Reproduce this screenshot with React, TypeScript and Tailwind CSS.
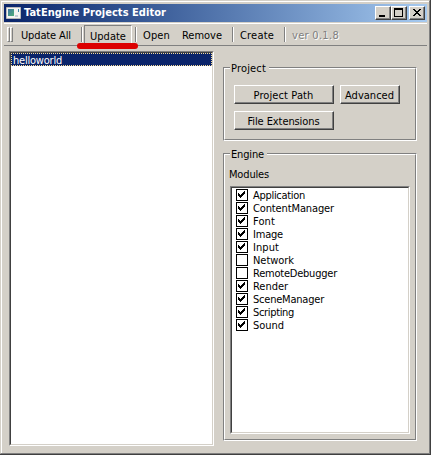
import { useLayoutEffect, useRef } from 'react';

// Text whose letter spacing is adjusted so that it fills the given width.
function Label({ text, width, className = '' }: { text: string; width: number; className?: string }) {
  const ref = useRef<HTMLSpanElement>(null);
  useLayoutEffect(() => {
    const el = ref.current;
    if (!el) return;
    el.style.letterSpacing = '0px';
    const natural = el.getBoundingClientRect().width;
    el.style.letterSpacing = `${(width - natural) / text.length}px`;
  }, [text, width]);
  return <span ref={ref} className={`shrink-0 whitespace-pre ${className}`}>{text}</span>;
}

function Separator({ className = '' }: { className?: string }) {
  return <div className={`h-[15px] w-0.5 shrink-0 border-l border-r border-l-[#808080] border-r-white ${className}`} />;
}

function Grip() {
  return <div className="h-[15px] w-[3px] border border-t-white border-l-white border-r-[#808080] border-b-[#808080]" />;
}

function CaptionButton({ kind, className = '' }: { kind: 'min' | 'max' | 'close'; className?: string }) {
  return (
    <button className={`h-3.5 w-4 shrink-0 border border-t-white border-l-white border-r-[#404040] border-b-[#404040] bg-[#d4d0c8] ${className}`}>
      <svg width="14" height="12" viewBox="0 0 14 12" shapeRendering="crispEdges" className="block">
        <path d="M13.5 0V11.5H0" fill="none" stroke="#808080" />
        {kind === 'min' && <path d="M3 8h6v2H3z" />}
        {kind === 'max' && <path fillRule="evenodd" d="M2 1h9v9H2zM3 3v6h7V3z" />}
        {kind === 'close' && (
          <path d="M3 2h2v1H3zM9 2h2v1H9zM4 3h2v1H4zM8 3h2v1H8zM5 4h4v1H5zM6 5h2v1H6zM5 6h4v1H5zM4 7h2v1H4zM8 7h2v1H8zM3 8h2v1H3zM9 8h2v1H9z" />
        )}
      </svg>
    </button>
  );
}

function Button({ text, textWidth, className }: { text: string; textWidth: number; className: string }) {
  return (
    <button className={`h-[19px] border border-t-white border-l-white border-r-[#404040] border-b-[#404040] ${className}`}>
      <span className="flex h-full items-center justify-center border-r border-b border-[#808080] pt-0.5">
        <Label text={text} width={textWidth} />
      </span>
    </button>
  );
}

function Group({ title, titleWidth, className, children }: { title: string; titleWidth: number; className: string; children: React.ReactNode }) {
  return (
    <section className={`border border-t-[#808080] border-l-[#808080] border-r-white border-b-white ${className}`}>
      <div className="h-full border border-t-white border-l-white border-r-[#808080] border-b-[#808080]">
        <h2 className="-mt-[7px] ml-[5px] flex h-[13px] w-fit bg-[#d4d0c8] pr-[3px] pl-px leading-[14px]">
          <Label text={title} width={titleWidth} />
        </h2>
        {children}
      </div>
    </section>
  );
}

function ListBox({ className, children }: { className: string; children: React.ReactNode }) {
  return (
    <div className={`border border-t-[#808080] border-l-[#808080] border-r-white border-b-white ${className}`}>
      <div className="h-full border border-t-[#404040] border-l-[#404040] border-r-[#d4d0c8] border-b-[#d4d0c8] bg-white">{children}</div>
    </div>
  );
}

const modules: [string, number, boolean][] = [
  ['Application', 52, true],
  ['ContentManager', 81, true],
  ['Font', 22, true],
  ['Image', 30, true],
  ['Input', 26, true],
  ['Network', 41, false],
  ['RemoteDebugger', 84, false],
  ['Render', 35, true],
  ['SceneManager', 71, true],
  ['Scripting', 41, true],
  ['Sound', 31, true],
];

export default function App() {
  return (
    <div className="h-[455px] w-[431px] overflow-hidden border-r border-b border-[#404040] bg-[#d4d0c8] font-['DejaVu_Sans_Condensed','DejaVu_Sans',sans-serif] text-[11px] leading-[13px] text-black [font-stretch:condensed]">
      <div className="h-full border-t border-l border-r border-b border-t-[#d4d0c8] border-l-[#d4d0c8] border-r-[#808080] border-b-[#808080]">
        <div className="flex h-full flex-col border-t border-l border-white pt-0.5 pr-0.5 pl-0.5">
          <header className="flex h-[18px] shrink-0 items-center bg-linear-to-r from-[#0a246a] to-[#a6caf0] pr-0.5 pl-0.5">
            <svg width="15" height="14" viewBox="0 0 15 14" className="shrink-0">
              <defs>
                <linearGradient id="screen" x1="0" y1="0" x2="1" y2="1">
                  <stop offset="0" stopColor="#4275a5" />
                  <stop offset="1" stopColor="#4eb078" />
                </linearGradient>
              </defs>
              <path fill="#f4f4f2" stroke="#b9b9b9" strokeWidth="1" d="M.5 1.5h14v11H.5z" />
              <path fill="url(#screen)" d="M2 3h6v7H2z" />
              <path fill="#3c86a5" d="M12 3h1v3h-1z" />
              <path fill="#c5ced8" d="M9 9h3v2H9z" />
            </svg>
            <h1 className="ml-[3px] flex text-[11px] leading-[14px] font-bold text-white">
              <Label text="TatEngine Projects Editor" width={142} />
            </h1>
            <CaptionButton kind="min" className="ml-auto" />
            <CaptionButton kind="max" />
            <CaptionButton kind="close" className="ml-0.5" />
          </header>
          <nav className="mt-px flex h-[23px] shrink-0 items-center border-t border-b border-t-white border-b-[#808080] pl-[3px]">
            <Grip />
            <Grip />
            <Label text="Update All" width={50} className="ml-2 pt-0.5" />
            <Separator className="ml-[10px]" />
            <div className="relative ml-px flex h-[19px] w-12 shrink-0 items-center border border-t-[#808080] border-l-[#808080] border-r-white border-b-white pt-[3px] pl-[5px]">
              <Label text="Update" width={36} />
              <div className="absolute top-[17px] -left-[8px] h-[6px] w-[61px] rounded-full bg-[#dc0000]" />
            </div>
            <Separator className="ml-[3px]" />
            <Label text="Open" width={27} className="ml-1.5 pt-0.5" />
            <Label text="Remove" width={40} className="ml-3 pt-0.5" />
            <Separator className="ml-[10px]" />
            <Label text="Create" width={34} className="ml-1.5 pt-0.5" />
            <Separator className="ml-[10px]" />
            <Label text="ver 0.1.8" width={47} className="ml-1.5 pt-0.5 text-[#808080] [text-shadow:1px_1px_0_#fff]" />
          </nav>
          <main className="flex items-start pt-[5px] pl-[5px]">
            <ListBox className="h-[395px] w-[205px] shrink-0">
              <div className="flex h-[13px] items-center border border-dotted border-[#f5db95] bg-[#0a246a] pt-px pl-px text-white">
                <Label text="helloworld" width={49} />
              </div>
            </ListBox>
            <div className="ml-[9px] w-[194px] shrink-0">
              <Group title="Project" titleWidth={35} className="mt-4 h-[74px]">
                <div className="flex flex-wrap gap-x-1.5 gap-y-[7px] pt-[10px] pl-[9px]">
                  <Button text="Project Path" textWidth={60} className="w-[100px]" />
                  <Button text="Advanced" textWidth={49} className="w-[60px]" />
                  <Button text="File Extensions" textWidth={72} className="w-[100px]" />
                </div>
              </Group>
              <Group title="Engine" titleWidth={33} className="mt-3 h-[288px]">
                <div className="mt-[7px] ml-1 flex">
                  <Label text="Modules" width={40} />
                </div>
                <ListBox className="mt-[5px] ml-[5px] h-[248px] w-[180px]">
                  <ul className="pt-px pl-1">
                    {modules.map(([name, width, checked]) => (
                      <li key={name} className="flex h-[13px] items-start">
                        <span className="h-3 w-3 shrink-0 border border-black">
                          {checked && (
                            <svg width="10" height="10" viewBox="0 0 10 10" shapeRendering="crispEdges" className="block">
                              <path d="M1 3h1v3H1zM2 4h1v3H2zM3 5h1v3H3zM4 4h1v3H4zM5 3h1v3H5zM6 2h1v3H6zM7 1h1v3H7z" />
                            </svg>
                          )}
                        </span>
                        <Label text={name} width={width} className="ml-[5px]" />
                      </li>
                    ))}
                  </ul>
                </ListBox>
              </Group>
            </div>
          </main>
        </div>
      </div>
    </div>
  );
}
